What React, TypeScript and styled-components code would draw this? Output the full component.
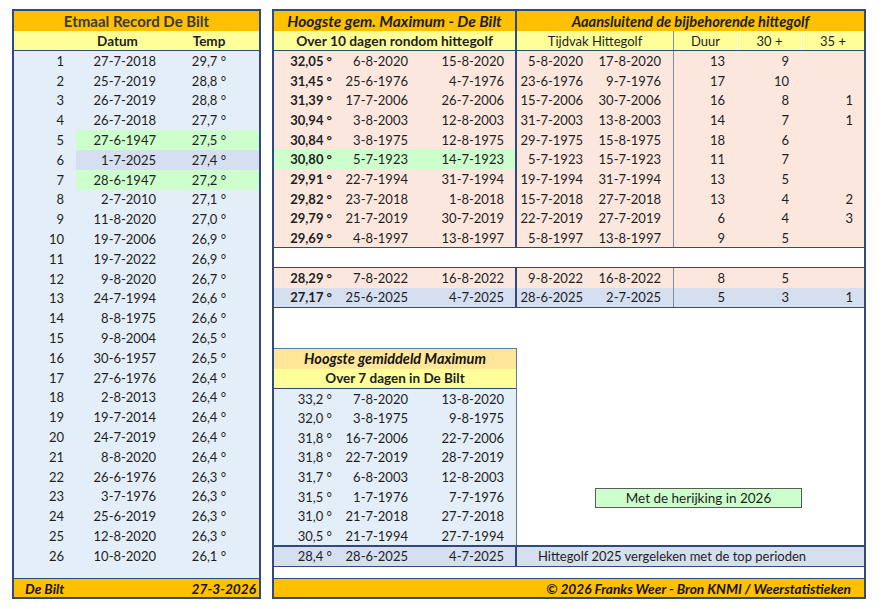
import React from 'react';
import styled, { createGlobalStyle } from 'styled-components';

const NAVY = '#2F4B7C';
const ORANGE = '#FFC000';
const YELLOW = '#FFFF99';
const PEACH = '#FFE699';
const ICE = '#E4EEF8';
const PINK = '#FBE7DE';
const SLATE = '#D6DFEF';
const GREEN = '#CCFFCC';

const Global = createGlobalStyle`
  html, body { margin: 0; padding: 0; background: #fff; }
  body { font-family: Lato, "Liberation Sans", sans-serif; color: #1e1e1e; font-size: 13px; }
  * { box-sizing: border-box; }
`;

const Page = styled.div`
  display: flex;
  gap: 11px;
  padding: 9px 0 0 12px;
  width: 883px;
  height: 609px;
`;

/* ---------- Left panel ---------- */
const LeftPanel = styled.div`
  width: 249px;
  height: 590px;
  border: 2px solid ${NAVY};
  background: ${ICE};
  display: flex;
  flex-direction: column;
`;

const TitleBar = styled.div<{ $bg: string; $italic?: boolean; $color?: string; $size?: number }>`
  height: 20px;
  background: ${(p) => p.$bg};
  display: flex;
  align-items: center;
  justify-content: center;
  font-weight: 700;
  font-size: ${(p) => p.$size ?? 15}px;
  font-style: ${(p) => (p.$italic ? 'italic' : 'normal')};
  color: ${(p) => p.$color ?? '#141414'};
  white-space: nowrap;
`;

const LeftGrid = styled.div<{ $bg?: string; $h?: number; $line?: boolean }>`
  display: grid;
  grid-template-columns: 62px 83px 100px;
  height: ${(p) => p.$h ?? 19.8}px;
  background: ${(p) => p.$bg ?? 'transparent'};
  border-bottom: ${(p) => (p.$line ? `1px solid ${NAVY}` : 'none')};
`;

const LCell = styled.div<{ $align: 'left' | 'right' | 'center'; $pr?: number; $bg?: string; $bold?: boolean }>`
  display: flex;
  align-items: center;
  justify-content: ${(p) => (p.$align === 'right' ? 'flex-end' : p.$align === 'center' ? 'center' : 'flex-start')};
  padding-right: ${(p) => p.$pr ?? 0}px;
  background: ${(p) => p.$bg ?? 'transparent'};
  font-weight: ${(p) => (p.$bold ? 700 : 400)};
  font-size: ${(p) => (p.$bold ? 13.5 : 13)}px;
  white-space: nowrap;
`;

const Filler = styled.div`
  flex: 1;
`;

const Footer = styled.div<{ $justify: string; $pr: number }>`
  height: 19px;
  border-top: 1px solid ${NAVY};
  background: ${ORANGE};
  display: flex;
  align-items: center;
  justify-content: ${(p) => p.$justify};
  padding: 0 ${(p) => p.$pr}px 0 11px;
  font-weight: 700;
  font-style: italic;
  font-size: 13.7px;
  color: #141414;
  white-space: nowrap;
`;

/* ---------- Right panel ---------- */
const RightPanel = styled.div`
  width: 594px;
  height: 590px;
  border: 2px solid ${NAVY};
  background: #fff;
  display: flex;
  flex-direction: column;
`;

const COLS = '66px 80px 97px 79px 78px 64px 64px 62px';

const Row = styled.div<{ $bg?: string; $h?: number; $bottom?: string; $top?: string; $cols?: string }>`
  display: grid;
  grid-template-columns: ${(p) => p.$cols ?? COLS};
  height: ${(p) => p.$h ?? 19.7}px;
  background: ${(p) => p.$bg ?? 'transparent'};
  border-bottom: ${(p) => p.$bottom ?? 'none'};
  border-top: ${(p) => p.$top ?? 'none'};
`;

type Div = 'strong' | 'soft' | 'light';

const Cell = styled.div<{
  $align?: 'left' | 'right' | 'center';
  $pr?: number;
  $pl?: number;
  $bold?: boolean;
  $italic?: boolean;
  $div?: Div;
  $bg?: string;
  $span?: number;
  $size?: number;
}>`
  grid-column: span ${(p) => p.$span ?? 1};
  display: flex;
  align-items: center;
  justify-content: ${(p) => (p.$align === 'left' ? 'flex-start' : p.$align === 'center' ? 'center' : 'flex-end')};
  padding-right: ${(p) => p.$pr ?? 0}px;
  padding-left: ${(p) => p.$pl ?? 0}px;
  font-weight: ${(p) => (p.$bold ? 700 : 400)};
  font-style: ${(p) => (p.$italic ? 'italic' : 'normal')};
  font-size: ${(p) => p.$size ?? 13}px;
  background: ${(p) => p.$bg ?? 'transparent'};
  border-right: ${(p) =>
    p.$div === 'strong'
      ? `2px solid ${NAVY}`
      : p.$div === 'soft'
      ? '1px solid #7F8CA6'
      : p.$div === 'light'
      ? '1px solid rgba(255,255,255,0.85)'
      : 'none'};
  white-space: nowrap;
  overflow: hidden;
`;

const BlankRow = styled.div`
  height: 20px;
  border-bottom: 1px solid ${NAVY};
`;

const Middle = styled.div`
  display: flex;
  height: 237px;
`;

const MiddleLeft = styled.div`
  width: 243px;
  display: flex;
  flex-direction: column;
  padding-top: 40px;
`;

const SmallBox = styled.div`
  flex: 1;
  border-top: 1px solid #5B79AC;
  border-right: 1px solid #5B79AC;
  background: ${ICE};
  display: flex;
  flex-direction: column;
`;

const MiddleRight = styled.div`
  flex: 1;
  padding: 180px 0 0 78px;
`;

const NoteBox = styled.div`
  width: 207px;
  height: 20px;
  border: 1px solid #5a5a5a;
  background: ${GREEN};
  display: flex;
  align-items: center;
  justify-content: center;
  font-size: 13.5px;
  white-space: nowrap;
`;

const Gap = styled.div`
  flex: 1;
`;

/* ---------- Data ---------- */
const records: [string, string, string?][] = [
  ['27-7-2018', '29,7'],
  ['25-7-2019', '28,8'],
  ['26-7-2019', '28,8'],
  ['26-7-2018', '27,7'],
  ['27-6-1947', '27,5', GREEN],
  ['1-7-2025', '27,4', SLATE],
  ['28-6-1947', '27,2', GREEN],
  ['2-7-2010', '27,1'],
  ['11-8-2020', '27,0'],
  ['19-7-2006', '26,9'],
  ['19-7-2022', '26,9'],
  ['9-8-2020', '26,7'],
  ['24-7-1994', '26,6'],
  ['8-8-1975', '26,6'],
  ['9-8-2004', '26,5'],
  ['30-6-1957', '26,5'],
  ['27-6-1976', '26,4'],
  ['2-8-2013', '26,4'],
  ['19-7-2014', '26,4'],
  ['24-7-2019', '26,4'],
  ['8-8-2020', '26,4'],
  ['26-6-1976', '26,3'],
  ['3-7-1976', '26,3'],
  ['25-6-2019', '26,3'],
  ['12-8-2020', '26,3'],
  ['10-8-2020', '26,1'],
];

type Wave = {
  avg: string;
  from: string;
  to: string;
  hFrom: string;
  hTo: string;
  dur: string;
  t30: string;
  t35: string;
  hl?: string;
  rowBg?: string;
};

const waves: Wave[] = [
  { avg: '32,05', from: '6-8-2020', to: '15-8-2020', hFrom: '5-8-2020', hTo: '17-8-2020', dur: '13', t30: '9', t35: '' },
  { avg: '31,45', from: '25-6-1976', to: '4-7-1976', hFrom: '23-6-1976', hTo: '9-7-1976', dur: '17', t30: '10', t35: '' },
  { avg: '31,39', from: '17-7-2006', to: '26-7-2006', hFrom: '15-7-2006', hTo: '30-7-2006', dur: '16', t30: '8', t35: '1' },
  { avg: '30,94', from: '3-8-2003', to: '12-8-2003', hFrom: '31-7-2003', hTo: '13-8-2003', dur: '14', t30: '7', t35: '1' },
  { avg: '30,84', from: '3-8-1975', to: '12-8-1975', hFrom: '29-7-1975', hTo: '15-8-1975', dur: '18', t30: '6', t35: '' },
  { avg: '30,80', from: '5-7-1923', to: '14-7-1923', hFrom: '5-7-1923', hTo: '15-7-1923', dur: '11', t30: '7', t35: '', hl: GREEN },
  { avg: '29,91', from: '22-7-1994', to: '31-7-1994', hFrom: '19-7-1994', hTo: '31-7-1994', dur: '13', t30: '5', t35: '' },
  { avg: '29,82', from: '23-7-2018', to: '1-8-2018', hFrom: '15-7-2018', hTo: '27-7-2018', dur: '13', t30: '4', t35: '2' },
  { avg: '29,79', from: '21-7-2019', to: '30-7-2019', hFrom: '22-7-2019', hTo: '27-7-2019', dur: '6', t30: '4', t35: '3' },
  { avg: '29,69', from: '4-8-1997', to: '13-8-1997', hFrom: '5-8-1997', hTo: '13-8-1997', dur: '9', t30: '5', t35: '' },
];

const extraWaves: Wave[] = [
  { avg: '28,29', from: '7-8-2022', to: '16-8-2022', hFrom: '9-8-2022', hTo: '16-8-2022', dur: '8', t30: '5', t35: '', rowBg: PINK },
  { avg: '27,17', from: '25-6-2025', to: '4-7-2025', hFrom: '28-6-2025', hTo: '2-7-2025', dur: '5', t30: '3', t35: '1', rowBg: SLATE },
];

const week: [string, string, string][] = [
  ['33,2', '7-8-2020', '13-8-2020'],
  ['32,0', '3-8-1975', '9-8-1975'],
  ['31,8', '16-7-2006', '22-7-2006'],
  ['31,8', '22-7-2019', '28-7-2019'],
  ['31,7', '6-8-2003', '12-8-2003'],
  ['31,5', '1-7-1976', '7-7-1976'],
  ['31,0', '21-7-2018', '27-7-2018'],
  ['30,5', '21-7-1994', '27-7-1994'],
];

const WaveRow: React.FC<{ w: Wave; bottom?: string; h?: number }> = ({ w, bottom, h }) => (
  <Row $bg={w.rowBg ?? PINK} $bottom={bottom} $h={h}>
    <Cell $pr={8} $bold $bg={w.hl}>{w.avg} °</Cell>
    <Cell $pr={12} $bg={w.hl}>{w.from}</Cell>
    <Cell $pr={11} $bg={w.hl} $div="strong">{w.to}</Cell>
    <Cell $pr={13}>{w.hFrom}</Cell>
    <Cell $pr={12} $div="soft">{w.hTo}</Cell>
    <Cell $pr={13}>{w.dur}</Cell>
    <Cell $pr={13}>{w.t30}</Cell>
    <Cell $pr={11}>{w.t35}</Cell>
  </Row>
);

export default function App() {
  return (
    <>
      <Global />
      <Page>
        <LeftPanel>
          <TitleBar $bg={ORANGE} $color="#3a3a3a" $size={15}>Etmaal Record De Bilt</TitleBar>
          <LeftGrid $bg={YELLOW} $h={20} $line>
            <LCell $align="center" />
            <LCell $align="center" $bold>Datum</LCell>
            <LCell $align="center" $bold>Temp</LCell>
          </LeftGrid>
          {records.map(([d, t, bg], i) => (
            <LeftGrid key={i}>
              <LCell $align="right" $pr={12}>{i + 1}</LCell>
              <LCell $align="right" $pr={3} $bg={bg}>{d}</LCell>
              <LCell $align="center" $bg={bg}>{t} °</LCell>
            </LeftGrid>
          ))}
          <Filler />
          <Footer $justify="space-between" $pr={3}>
            <span>De Bilt</span>
            <span>27-3-2026</span>
          </Footer>
        </LeftPanel>

        <RightPanel>
          <Row $bg={ORANGE} $h={20}>
            <Cell $span={3} $align="center" $bold $italic $size={15.5} $div="strong">
              Hoogste gem. Maximum - De Bilt
            </Cell>
            <Cell $span={5} $align="center" $bold $italic $size={14.6}>
              Aaansluitend de bijbehorende hittegolf
            </Cell>
          </Row>
          <Row $bg={YELLOW} $h={20} $bottom={`1px solid ${NAVY}`}>
            <Cell $span={3} $align="center" $bold $size={13.8} $div="strong">Over 10 dagen rondom hittegolf</Cell>
            <Cell $span={2} $align="center" $div="soft">Tijdvak Hittegolf</Cell>
            <Cell $align="center" $div="light">Duur</Cell>
            <Cell $align="center" $div="light">30 +</Cell>
            <Cell $align="center">35 +</Cell>
          </Row>
          {waves.map((w, i) => (
            <WaveRow key={i} w={w} bottom={i === waves.length - 1 ? `1px solid ${NAVY}` : undefined} />
          ))}
          <BlankRow />
          <WaveRow w={extraWaves[0]} h={20} />
          <WaveRow w={extraWaves[1]} h={20} bottom={`1px solid ${NAVY}`} />

          <Middle>
            <MiddleLeft>
              <SmallBox>
                <TitleBar $bg={PEACH} $italic $color="#141414" $size={14.5}>Hoogste gemiddeld Maximum</TitleBar>
                <Row $cols="1fr" $bg={YELLOW} $h={20} $bottom={`1px solid ${NAVY}`}>
                  <Cell $align="center" $bold $size={13.5}>Over 7 dagen in De Bilt</Cell>
                </Row>
                {week.map(([a, f, t], i) => (
                  <Row key={i} $cols="66px 80px 96px" $h={19.6}>
                    <Cell $pr={8}>{a} °</Cell>
                    <Cell $pr={12}>{f}</Cell>
                    <Cell $pr={12}>{t}</Cell>
                  </Row>
                ))}
              </SmallBox>
            </MiddleLeft>
            <MiddleRight>
              <NoteBox>Met de herijking in 2026</NoteBox>
            </MiddleRight>
          </Middle>

          <Row $bg={SLATE} $h={22} $top={`2px solid ${NAVY}`} $bottom={`1px solid ${NAVY}`}>
            <Cell $pr={8}>28,4 °</Cell>
            <Cell $pr={12}>28-6-2025</Cell>
            <Cell $pr={11} $div="strong">4-7-2025</Cell>
            <Cell $span={5} $align="left" $pl={21}>Hittegolf 2025 vergeleken met de top perioden</Cell>
          </Row>
          <Gap />
          <Footer $justify="flex-end" $pr={13}>© 2026 Franks Weer - Bron KNMI / Weerstatistieken</Footer>
        </RightPanel>
      </Page>
    </>
  );
}
